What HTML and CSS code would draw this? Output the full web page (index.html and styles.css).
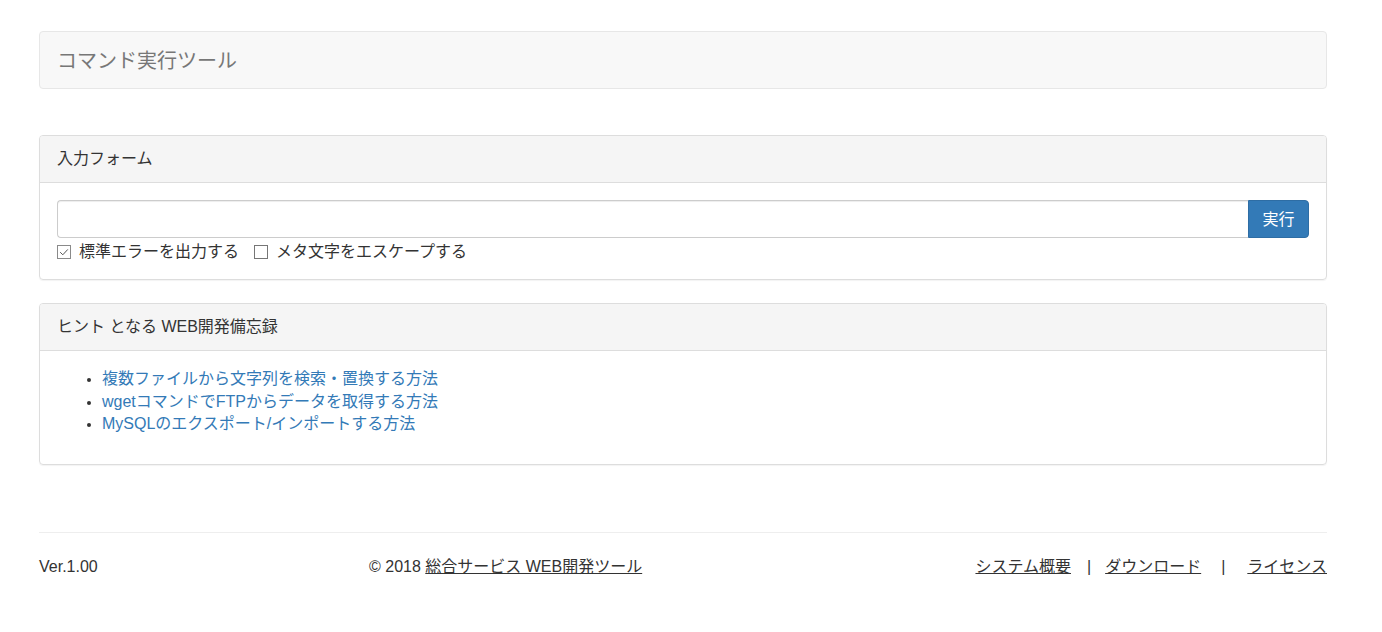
FILE: index.html
```html
<!DOCTYPE html>
<html lang="ja">
<head>
    <meta charset="UTF-8">
    <meta name="viewport" content="width=device-width, initial-scale=1.0">
    <title>コマンド実行ツール</title>
    <link rel="stylesheet" href="styles.css">
</head>
<body>
    <div class="container">
        <div class="navbar">
            <span class="brand">コマンド実行ツール</span>
        </div>

        <div class="panel">
            <div class="panel-heading">入力フォーム</div>
            <div class="panel-body">
                <div class="input-group">
                    <input type="text" class="form-control" id="command">
                    <button class="btn-primary">実行</button>
                </div>
                <div class="options">
                    <label class="check">
                        <span class="box checked">
                            <svg viewBox="0 0 14 14" width="14" height="14"><path d="M3.2 7.2 L5.8 9.8 L10.8 4.4" fill="none" stroke="#555" stroke-width="1"/></svg>
                        </span>
                        標準エラーを出力する
                    </label>
                    <label class="check">
                        <span class="box"></span>
                        メタ文字をエスケープする
                    </label>
                </div>
            </div>
        </div>

        <div class="panel">
            <div class="panel-heading">ヒント となる WEB開発備忘録</div>
            <div class="panel-body">
                <ul class="hints">
                    <li><a href="#">複数ファイルから文字列を検索・置換する方法</a></li>
                    <li><a href="#">wgetコマンドでFTPからデータを取得する方法</a></li>
                    <li><a href="#">MySQLのエクスポート/インポートする方法</a></li>
                </ul>
            </div>
        </div>

        <footer class="footer">
            <div class="ver">Ver.1.00</div>
            <div class="copy">© 2018 <a href="#">総合サービス WEB開発ツール</a></div>
            <div class="links">
                <a href="#">システム概要</a>
                <span class="sep">|</span>
                <a href="#">ダウンロード</a>
                <span class="sep sep-wide">|</span>
                <a href="#">ライセンス</a>
            </div>
        </footer>
    </div>
</body>
</html>
```

FILE: styles.css
```css
body {
    margin: 0;
    font-family: "Liberation Sans", Arial, "Noto Sans CJK JP", sans-serif;
    font-size: 16px;
    line-height: 1.42;
    color: #333;
    background: #fff;
}

.container {
    width: 1288px;
    margin-left: 39px;
    padding-top: 31px;
}

a {
    color: #337ab7;
    text-decoration: none;
}

.navbar {
    height: 56px;
    background: #f8f8f8;
    border: 1px solid #e7e7e7;
    border-radius: 4px;
    display: flex;
    align-items: center;
    padding-left: 17px;
    margin-bottom: 46px;
}

.brand {
    font-size: 20px;
    color: #777;
    padding-top: 2px;
}

.panel {
    border: 1px solid #ddd;
    border-radius: 4px;
    box-shadow: 0 1px 1px rgba(0,0,0,0.05);
    margin-bottom: 23px;
}

.panel-heading {
    background: #f5f5f5;
    border-bottom: 1px solid #ddd;
    border-radius: 3px 3px 0 0;
    height: 46px;
    display: flex;
    align-items: center;
    padding-left: 17px;
}

.panel-body {
    padding: 17px 17px 16px;
}

.input-group {
    display: flex;
    height: 38px;
}

.form-control {
    flex: 1;
    height: 38px;
    box-sizing: border-box;
    border: 1px solid #ccc;
    border-right: none;
    border-radius: 4px 0 0 4px;
    box-shadow: inset 0 1px 1px rgba(0,0,0,0.075);
    padding: 6px 12px;
    font-size: 16px;
    margin: 0;
}

.btn-primary {
    width: 61px;
    height: 38px;
    background: #337ab7;
    border: 1px solid #2e6da4;
    border-radius: 0 4px 4px 0;
    color: #fff;
    font-family: inherit;
    font-size: 16px;
    padding: 0 0 2px;
    margin: 0;
}

.options {
    display: flex;
    gap: 15px;
    margin-top: 3px;
    height: 22px;
    align-items: center;
}

.check {
    display: flex;
    align-items: center;
    gap: 8px;
}

.box {
    width: 14px;
    height: 14px;
    border: 1px solid #767676;
    box-sizing: border-box;
    background: #fff;
    display: inline-block;
    position: relative;
}

.box svg {
    position: absolute;
    left: -1px;
    top: -1px;
}

.box.checked {
    border-color: #8a8a8a;
}

.hints {
    margin: 0 0 12px;
    padding-left: 45px;
    line-height: 22.5px;
}

.hints li::marker {
    color: #333;
    font-size: 14px;
}

.footer {
    margin-top: 67px;
    border-top: 1px solid #eee;
    height: 70px;
    display: flex;
    align-items: center;
}

.footer a {
    color: #333;
    text-decoration: underline;
}

.ver {
    width: 330px;
}

.copy {
    flex: 1;
}

.links {
    display: flex;
    align-items: center;
}

.sep {
    margin: 0 14px 0 16px;
}

.sep-wide {
    margin: 0 22px 0 20px;
}
```
